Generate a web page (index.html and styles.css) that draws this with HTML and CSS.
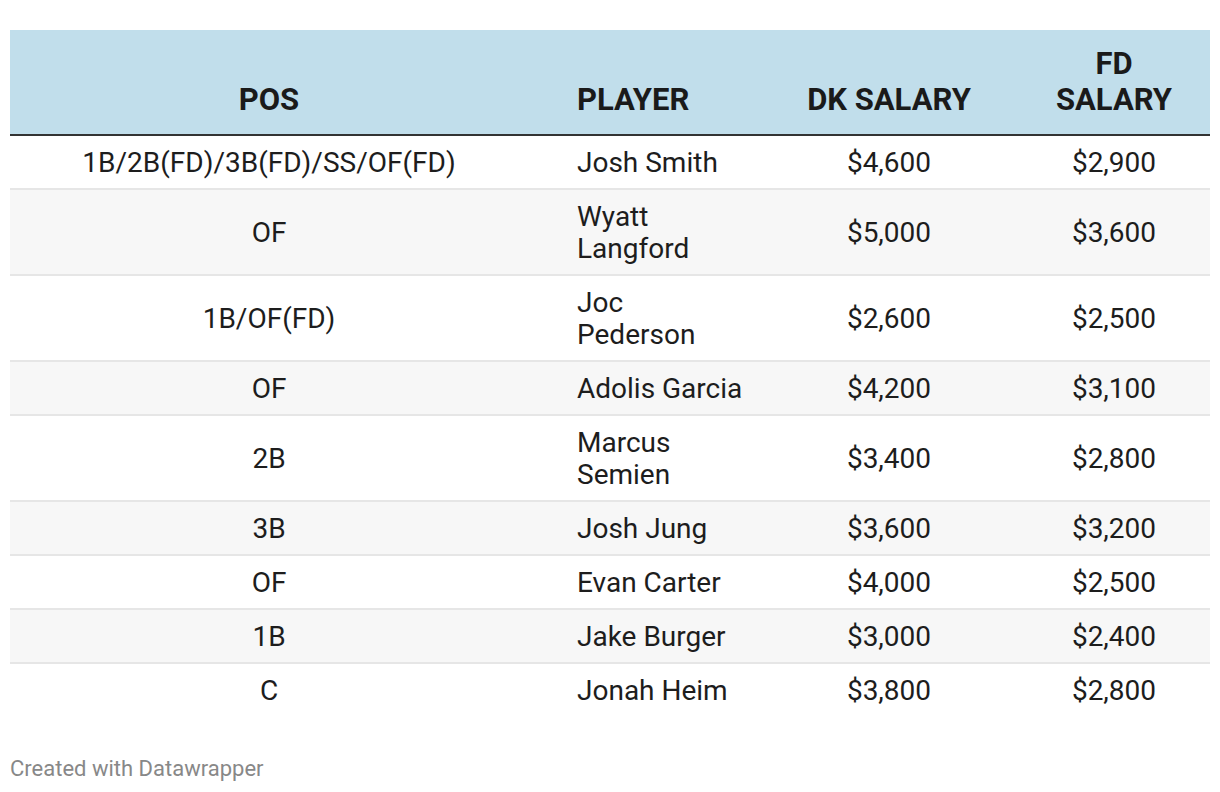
FILE: index.html
```html
<!DOCTYPE html>
<html>
<head>
<meta charset="utf-8">
<link rel="stylesheet" href="styles.css">
</head>
<body>
<div class="chart">
  <table class="salaries">
    <colgroup>
      <col class="c-pos">
      <col class="c-player">
      <col class="c-dk">
      <col class="c-fd">
    </colgroup>
    <thead>
      <tr>
        <th class="center">POS</th>
        <th class="player">PLAYER</th>
        <th class="center">DK SALARY</th>
        <th class="center fd">FD SALARY</th>
      </tr>
    </thead>
    <tbody>
      <tr><td class="center">1B/2B(FD)/3B(FD)/SS/OF(FD)</td><td class="player">Josh Smith</td><td class="center">$4,600</td><td class="center">$2,900</td></tr>
      <tr><td class="center">OF</td><td class="player">Wyatt Langford</td><td class="center">$5,000</td><td class="center">$3,600</td></tr>
      <tr><td class="center">1B/OF(FD)</td><td class="player">Joc Pederson</td><td class="center">$2,600</td><td class="center">$2,500</td></tr>
      <tr><td class="center">OF</td><td class="player">Adolis Garcia</td><td class="center">$4,200</td><td class="center">$3,100</td></tr>
      <tr><td class="center">2B</td><td class="player">Marcus Semien</td><td class="center">$3,400</td><td class="center">$2,800</td></tr>
      <tr><td class="center">3B</td><td class="player">Josh Jung</td><td class="center">$3,600</td><td class="center">$3,200</td></tr>
      <tr><td class="center">OF</td><td class="player">Evan Carter</td><td class="center">$4,000</td><td class="center">$2,500</td></tr>
      <tr><td class="center">1B</td><td class="player">Jake Burger</td><td class="center">$3,000</td><td class="center">$2,400</td></tr>
      <tr><td class="center">C</td><td class="player">Jonah Heim</td><td class="center">$3,800</td><td class="center">$2,800</td></tr>
    </tbody>
  </table>
  <div class="footer">Created with Datawrapper</div>
</div>
</body>
</html>
```

FILE: styles.css
```css
html, body {
  margin: 0;
  padding: 0;
  background: #ffffff;
}
body {
  font-family: Roboto, "Liberation Sans", sans-serif;
  color: #1d1d1d;
}
.chart {
  padding: 30px 10px 0 10px;
}
.salaries {
  width: 1200px;
  border-collapse: collapse;
  table-layout: fixed;
}
.c-pos { width: 518px; }
.c-player { width: 232px; }
.c-dk { width: 258px; }
.c-fd { width: 192px; }

.salaries thead tr {
  background: #c1deeb;
  border-bottom: 2px solid #333333;
}
.salaries th {
  font-size: 31px;
  line-height: 36px;
  font-weight: 700;
  color: #1a1a1a;
  vertical-align: bottom;
  padding: 16px 20px;
}
.salaries th.player {
  text-align: left;
  padding-left: 49px;
  padding-right: 15px;
}
.salaries td {
  font-size: 28px;
  line-height: 32px;
  padding: 11px 20px 9px 20px;
  vertical-align: middle;
}
.salaries td.player {
  text-align: left;
  padding-left: 49px;
  padding-right: 15px;
}
.center {
  text-align: center;
}
.salaries th.fd {
  padding-left: 22px;
  padding-right: 22px;
}
.salaries tbody tr {
  border-bottom: 2px solid #e6e6e6;
}
.salaries tbody tr:nth-child(even) {
  background: #f7f7f7;
}
.salaries tbody tr:last-child {
  border-bottom: none;
}
.footer {
  margin-top: 40px;
  font-size: 22px;
  line-height: 26px;
  color: #888888;
}
```
